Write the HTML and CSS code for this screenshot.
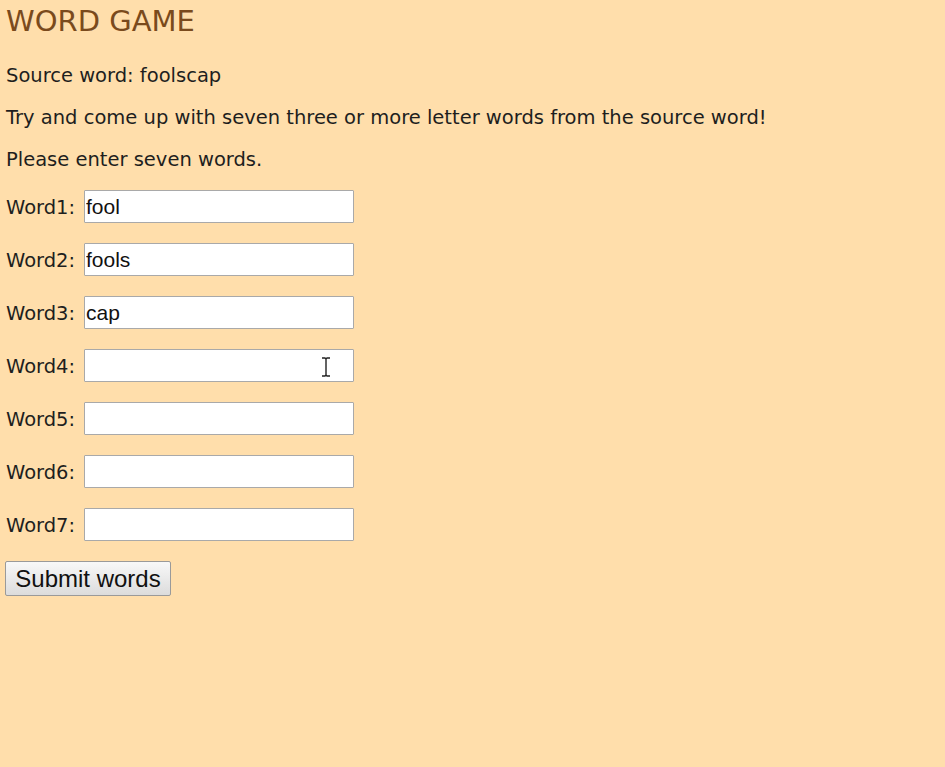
FILE: index.html
```html
<!DOCTYPE html>
<html>
<head>
<meta charset="utf-8">
<title>Word Game</title>
<link rel="stylesheet" href="styles.css">
</head>
<body>
<h1 class="title">WORD GAME</h1>
<div class="content">
  <p class="line">Source word: foolscap</p>
  <p class="line">Try and come up with seven three or more letter words from the source word!</p>
  <p class="line">Please enter seven words.</p>
  <form class="form">
    <label class="row"><span class="label">Word1:</span><input class="field" type="text" value="fool"></label>
    <label class="row"><span class="label">Word2:</span><input class="field" type="text" value="fools"></label>
    <label class="row"><span class="label">Word3:</span><input class="field" type="text" value="cap"></label>
    <label class="row"><span class="label">Word4:</span><span class="field-wrap"><input class="field" type="text" value=""><svg class="ibeam" width="10" height="20" viewBox="0 0 10 20"><path d="M1 1h3l1 1 1-1h3M5 2v16M1 19h3l1-1 1 1h3" fill="none" stroke="#222" stroke-width="1.4"/></svg></span></label>
    <label class="row"><span class="label">Word5:</span><input class="field" type="text" value=""></label>
    <label class="row"><span class="label">Word6:</span><input class="field" type="text" value=""></label>
    <label class="row"><span class="label">Word7:</span><input class="field" type="text" value=""></label>
    <div class="actions"><button class="submit" type="button">Submit words</button></div>
  </form>
</div>
</body>
</html>
```

FILE: styles.css
```css
html, body {
  margin: 0;
  padding: 0;
  background: #ffdeab;
}
body {
  padding: 0 6px;
  font-family: "DejaVu Sans", Verdana, sans-serif;
  font-size: 19.5px;
  color: #1e1e1e;
  min-height: 767px;
  box-sizing: border-box;
}
.title {
  margin: 0;
  padding-top: 4px;
  font-size: 29px;
  line-height: 34px;
  font-weight: normal;
  color: #7a4a1c;
}
.content {
  margin-top: 26px;
  display: flex;
  flex-direction: column;
  gap: 19px;
}
.line {
  margin: 0;
  line-height: 23px;
}
.form {
  display: flex;
  flex-direction: column;
  gap: 20px;
}
.row {
  display: flex;
  align-items: center;
  gap: 8px;
}
.label {
  width: 70px;
  white-space: nowrap;
  padding-top: 1px;
}
.field-wrap {
  position: relative;
  display: inline-block;
  height: 33px;
}
.field {
  box-sizing: border-box;
  width: 270px;
  height: 33px;
  margin: 0;
  padding: 0 1px;
  border: 1px solid #a9a9a9;
  border-radius: 1px;
  background: #fff;
  font-family: "Liberation Sans", Arial, sans-serif;
  font-size: 21px;
  color: #111;
}
.ibeam {
  position: absolute;
  left: 237px;
  top: 8px;
}
.actions {
  display: flex;
}
.submit {
  margin-left: -1px;
  box-sizing: border-box;
  width: 166px;
  height: 35px;
  padding: 0;
  border: 1px solid #9a9a9a;
  border-radius: 2px;
  background: linear-gradient(#f8f8f8, #dcdcdc);
  font-family: "Liberation Sans", Arial, sans-serif;
  font-size: 24px;
  color: #111;
}
```
